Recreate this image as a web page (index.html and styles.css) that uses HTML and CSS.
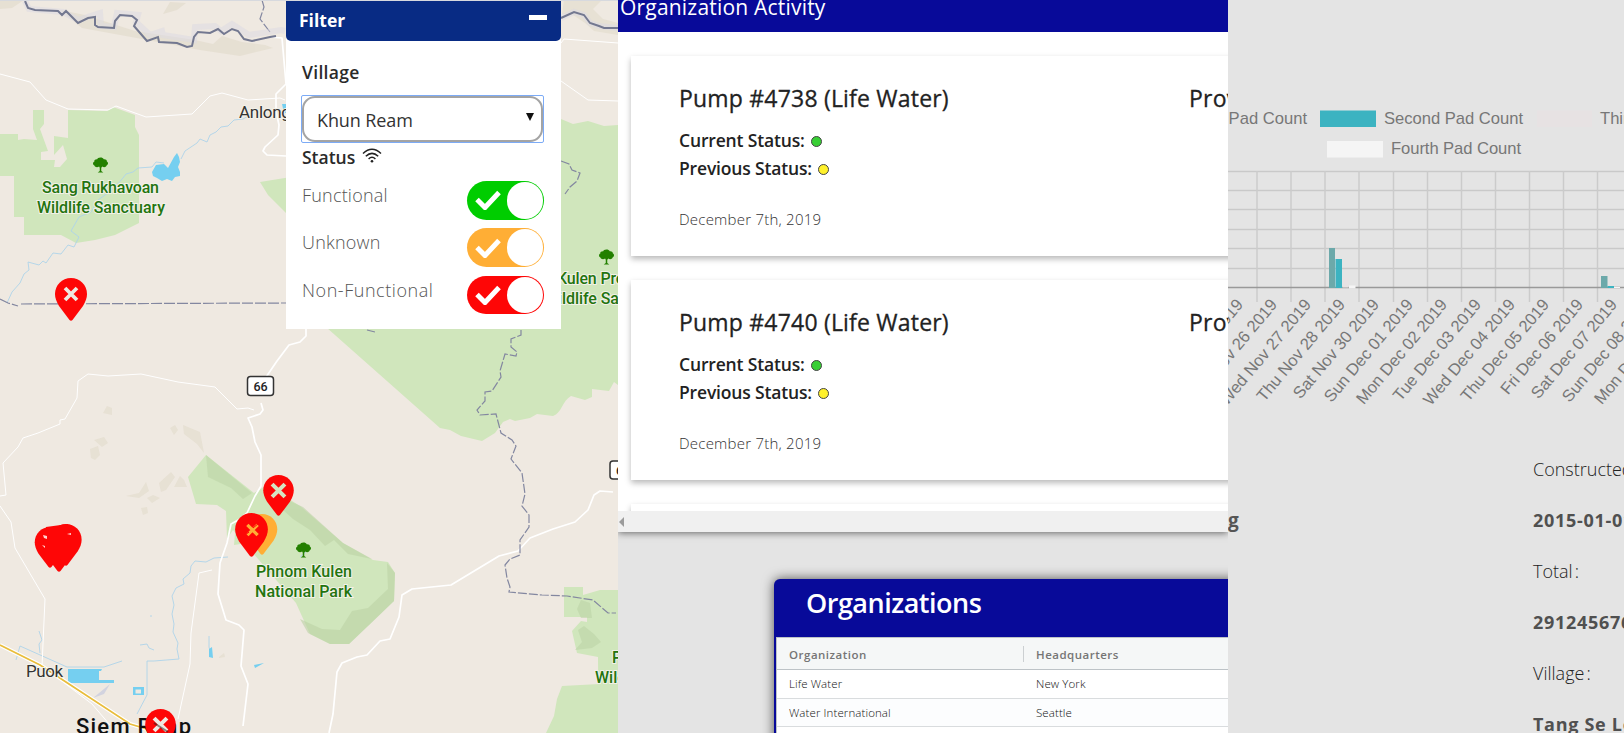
FILE: index.html
```html
<!DOCTYPE html>
<html lang="en">
<head>
<meta charset="utf-8">
<title>Pump Monitoring</title>
<link rel="stylesheet" href="styles.css">
</head>
<body>
<section class="map-pane">
  <svg class="map" width="618" height="733" viewBox="0 0 618 733">
    <defs>
      <symbol id="pin" viewBox="0 0 32 44" overflow="visible">
        <path d="M16 0C7 0 0 7 0 16c0 4 1.400 7.500 4 12L14.500 42q1.500 1.600 3 0L28 28c2.600-4.500 4-8 4-12C32 7 25 0 16 0z"/>
      </symbol>
      <symbol id="cross" viewBox="0 0 14 14" overflow="visible"><path d="M1 1l12 12M13 1L1 13" fill="none" stroke-width="3.800"/></symbol>
      <symbol id="tree" viewBox="0 0 16 16" overflow="visible">
        <path d="M8 0C5.500 0 5 1 4.500 1.800 2 1.700 1 3 1.500 4.300-.5 5-.5 8 1.500 8.500 2 10.500 5 10.800 6.500 9.500L7.200 11v3.500L5 16h6l-2.200-1.500V11L10 9.500c1.500 1.500 4 .8 4.500-1 2-1 2-3.500.3-4.300C15 2.500 13 1.500 11.500 1.900 11 .5 9.500 0 8 0z"/>
      </symbol>
    </defs>
    <rect width="618" height="733" fill="#efe9e1"/>
    <g fill="#d0e6bc">
      <path d="M0 134h18v6l6-1 13 1-4-11V110h11v14l-4 5 8 22-7 1v8h14l-1 7h6l7-8-4-14-9 10V136l14 2V110l39 1 6-4 22 8v12l4 8v88l-24 12-20 5-19 3-15-8H24v-18h-10v-41H0z"/>
      <path d="M260 182l31-5 258-60 12 2 12 5 15-3 16 5 14-1v260l-4-3-5 9-17-2v8l-7 3-14-4c-9 5-9 17-18 20l-16-2-7 4-15 3-5-2-7 3-8 11-13 8-21-5-11-6-10-2L318 320 286 279v-66l-18-18z"/>
      <path d="M206 455l48 38 13-8 33 21 43 37 30 17 15 2 7 11-1 28-25 24-20 19H330l-20-10-14-31-63-73-6 9-1-28-9-6-21-1-8-27z" transform="translate(0 0)"/>
      <path d="M564 587h19v8l17-5h18v125l-15-1-4-2-1-55-21-4-5-22 9-10 6 1v-5h-23z"/>
      <path d="M562 686l56-3v50h-72l8-17 3-17z"/>
      <path d="M235 533l12 10-13 2z"/>
    </g>
    <path d="M598 657l20 1v26l-19-1z" fill="#d0e6bc"/>
    <g fill="#e4ddcf" opacity=".75">
      <path d="M60 10l25 5 50 16 60 9 18 4 9-8 20 6 23 3 8 3-33 8-40-6-58-11-60-11z"/>
      <path d="M0 0h24L12 8 0 9zM170 2l16 1-9 7-14 4z"/>
      <path d="M103 413l4-7 5 2v7zM94 440l10-3 4 6-6 4zM90 449l8-3 2 9-5 5-4-2zM126 496l13-3 7-11 3 9-10 7zM159 483l12-11 4 5-9 13-5 2zM147 498l6-3 7 3-8 5zM141 508l6-1 1 6-5 2zM174 487l6-11 4 4 3 7zM170 428l5-3 3 5-4 5zM183 425l17 7 4 21-7-9-13-10zM219 657l5-4 1 4-6 1z"/>
      <path d="M564 0h38l-9 9 10 10 15 4v12l-24-4-9-8-12-8-11-1z"/>
    </g>
    <g fill="#bdd3a6" opacity=".6">
      <path d="M387 563l8 10-1 28-25 24-20 19H330l-22-11-8-14 22 10 18 1 12-19 16-3 20-19z"/>
      <path d="M206 455l46 38-9 6-12-11-23-11zM285 499l18 8 40 36 29 16-24-5-14-14-9 6-15-16-17-11-12-11z"/>
      <path d="M577 609l4-9 9 3 2 15h-11zM578 630l6-4 10 8 7 8-9 6-17 2 7-8z"/>
    </g>
    <g fill="none" stroke="#aed4ea" stroke-width=".9">
      <path d="M7 303l5-11 8-9 4-9 5-4-1-8 11 3 4-4 3 2 7-10 8 1 7-9 6 2 5-10-8-6 8-14 12-5 7-12 14-10 11-12 3-4 7-2 5-4 14-1 4-5 8 1M181 159l4-8 12-8 3-4 7 3 3-7 6-3 5-5 7-1 6-6 9-1 7-4"/>
      <path d="M228 557l-14 1-8 4-11-1-4 5-1 7-7 6 1 5-8 4-4 8 2 9-2 9 2 10-1 8 5 11-1 6 2 10-25 2h-7v34l-10 19M16 660l4-14 47 21h37l18-6M39 631l3 9-3 4 1 9M140 645l7-1 2 4 5 2M209 636v11l2 8M150 616h2M300 557l7-6"/>
    </g>
    <g fill="#75cff0">
      <path d="M152 172l4-7 8-1 4 4 6-11 3-4 2 4 1 5-2 5 2 5v4l-5 1-3 4-5-2-5 2-5-3-4-2z"/>
      <path d="M68 669h34l-1 2h-2v9h15v3H68z"/><path fill-rule="evenodd" d="M133 687h11v8h-11zm2.500 2.500v4h5.500v-4zM209 649l3-2 1 11-4-1zM254 665l10-2-9 5z"/><path d="M282 104h5v9h-3z"/>
    </g>
    <path d="M93 698l17-14-6 10z" fill="#d2d3df"/>
    <g fill="none" stroke="#fff" stroke-width="1" stroke-linejoin="round">
      <path d="M0 74l30 8 16 18 22 9 40 1 8-4 30 11 46-3 18-18 12-3 26 7 32-2 5 2M0 496l6-1-3-32 15-16 5-9 15-5 22-9v-4l5-1 12-21 1-17 10-7 20 2 33-2 37 8 37 5 22 22 11-1 6 2M0 506l11 16 4 26 30 51-3 67 50 38 18 21M212 570l-13 3-8 60-1 31-12 55M561 43l3-4 54 4M561 81l27 19 30 1"/>
    </g>
    <g fill="none" stroke="#fff" stroke-width="1.700" stroke-linejoin="round">
      <path d="M269 37l13 1 4 46-10 10v17l3 14-1 10-13 12-2 4 4 4 19 1M306 329v7l-6 6-11 3-12 16-15 22M261 403l2 7-3 4-12 4 4 9 3 15 6 13v31l-6 10-8 17-7 6-9 5-4 19-7 20-2 31 8 26 13 5 5 5-3 36 7 18-5 42M329 733l4-19 4-42 5-9 15-6 10-2 13-14 10-2 9-22 3-22 10-6 39-4 48-29 19-5 12-13 23-9 22-7 13-12 6-15 6-4 13 1"/>
    </g>
    <g fill="none" stroke="#8387a0" stroke-width="1.200">
      <path d="M262 0l2 7-4 12 10 13M0 299l8 4 10 3M21 304l265-1" stroke-dasharray="11 2"/>
      <path d="M561 161l8 3 3 6 8 3-3 8-7 6-5 7M521 330v5l-10 4v8l6 5-1 4-11-2-5 17 1 6-9 14-7 1v9l-8 9 3 5 16-1 5 19 11 7 4 6-5 13 11 14 3 21-3 12 7 9v12l-9 13v15l-10 4-5 6 2 13 3 9-1 5 33 3 25 1 26 4 15 13h8M367 330l8 2" stroke-dasharray="9 2"/>
    </g>
    <path d="M25 1l4 8 34 3 15 8 22-7 1 13 13 1 3-14 21 2-2 7 14 13 12-4 1 4 31 5 1-13 20-1 6 5 11-7 17 11 32-5 4 1M561 18l13-6 10 3 6 8 9 3 19 2" fill="none" stroke="#dcdae4" stroke-width="6" opacity=".5"/>
    <path d="M25 1l3 7 7 2 23 1 4 4 4-4 12 12 10-5 7-1v8l3 2 16 1 1-7 5-6 12 1 5 4-3 6 13 15 11-4 1 5 18 1 10 4 5-1 2-9 4-5 12 1 8-4 6 5 8-5 6 2 6 8 8 2 18-4 6-1M561 18l13-6 10 3 6 8 9 3 5 2h14" fill="none" stroke="#737890" stroke-width="2"/>
    <path d="M0 645l40 20 90 59 27 8" fill="none" stroke="#fff" stroke-width="4"/><path d="M0 645l40 20 90 59 27 8" fill="none" stroke="#e9bd3c" stroke-width="1.800"/>
    <g class="park-label">
      <use href="#tree" x="93" y="157" width="15" height="16"/><use href="#tree" x="599" y="249" width="15" height="16"/><use href="#tree" x="296" y="542" width="15" height="16"/>
      <text x="42" y="193" textLength="117">Sang Rukhavoan</text><text x="37" y="213" textLength="128">Wildlife Sanctuary</text>
      <text x="557" y="284" textLength="104">Kulen Promtep</text><text x="544" y="304" textLength="128">Wildlife Sanctuary</text>
      <text x="256" y="577" textLength="96">Phnom Kulen</text><text x="255" y="597" textLength="97">National Park</text>
      <text x="612" y="663">Phnom</text><text x="595" y="683">Wildlife</text>
    </g>
    <g class="town-label"><text x="239" y="118" textLength="93">Anlong Veng</text><text x="26" y="677" textLength="37">Puok</text></g>
    <text class="city-label" x="76" y="734" textLength="115">Siem Reap</text>
    <g class="shield"><rect x="247.500" y="376.500" width="26" height="19" rx="3"/><text x="253.500" y="391">66</text><rect x="610" y="461" width="26" height="18" rx="3"/><text x="616" y="475">66</text></g>
    <g fill="#fe0606">
      <use href="#pin" x="55" y="278" width="32" height="44"/>
      <use href="#pin" x="263" y="475" width="31" height="42"/>
      <use href="#pin" x="246" y="514" width="32" height="42" fill="#ffae35"/>
      <use href="#pin" x="235" y="513" width="33" height="45"/>
      <use href="#pin" x="34" y="527" width="32" height="42"/><use href="#pin" x="43" y="529" width="32" height="44"/><use href="#pin" x="50" y="524" width="32" height="43"/><path d="M46 527l22-3v35H46z"/>
      <use href="#pin" x="145" y="709" width="31" height="42"/>
    </g>
    <g stroke="#efe9e1"><use href="#cross" x="64" y="287" width="14" height="14"/><use href="#cross" x="271" y="483" width="15" height="15" stroke="#d5e4c2"/><use href="#cross" x="153" y="717" width="15" height="15"/></g>
    <use href="#cross" x="246" y="524" width="13" height="12" stroke="#ffae35"/>
    <path d="M245 535l4-3M253 528l6-5" stroke="#fe0606" stroke-width="1"/>
    <path d="M43 535l4 1v3l-3-1zM67 534l4-1v2zM42 545l3 1v2zM65 540l3 1z" fill="#ffd4d0"/>
    <path d="M154 723l14 9" stroke="#222" stroke-width="2" opacity=".5"/>
    <rect width="618" height="1" fill="#d7d9de"/>
  </svg>

  <aside class="filter">
    <header class="filter-head"><span>Filter</span><i class="collapse"></i></header>
    <div class="filter-body">
      <div class="label village-label">Village</div>
      <div class="select-focus"><div class="select"><span>Khun Ream</span><i class="caret"></i></div></div>
      <div class="label status-label"><span>Status</span>
        <svg class="wifi" width="20" height="15" viewBox="0 0 20 15"><g fill="none" stroke="#222" stroke-width="1.500"><path d="M1 5.500Q10-3 19 5.500M3.800 8.300Q10 2.400 16.200 8.300M6.600 11Q10 7.600 13.400 11"/></g><circle cx="10" cy="13.300" r="1.300" fill="#222"/></svg>
      </div>
      <div class="toggle-row"><span class="functional">Functional</span><div class="toggle green"><svg width="26" height="20" viewBox="0 0 26 20"><path d="M2 9.500l8 8L24 2.500" fill="none" stroke="#fff" stroke-width="5"/></svg><i></i></div></div>
      <div class="toggle-row"><span class="unknown">Unknown</span><div class="toggle orange"><svg width="26" height="20" viewBox="0 0 26 20"><path d="M2 9.500l8 8L24 2.500" fill="none" stroke="#fff" stroke-width="5"/></svg><i></i></div></div>
      <div class="toggle-row"><span class="nonfunctional">Non-Functional</span><div class="toggle red"><svg width="26" height="20" viewBox="0 0 26 20"><path d="M2 9.500l8 8L24 2.500" fill="none" stroke="#fff" stroke-width="5"/></svg><i></i></div></div>
    </div>
  </aside>
</section>

<section class="org-pane">
  <div class="activity">
    <header class="activity-head"><span>Organization Activity</span></header>
    <div class="cards">
      <article class="card">
        <div class="card-main"><h3>Pump #4738 (Life Water)</h3>
          <p class="status"><span class="cur">Current Status:</span><i class="dot ok"></i></p>
          <p class="status"><span class="prev">Previous Status:</span><i class="dot warn"></i></p>
          <p class="date">December 7th, 2019</p></div>
        <h3 class="province">Province</h3>
      </article>
      <article class="card">
        <div class="card-main"><h3>Pump #4740 (Life Water)</h3>
          <p class="status"><span class="cur">Current Status:</span><i class="dot ok"></i></p>
          <p class="status"><span class="prev">Previous Status:</span><i class="dot warn"></i></p>
          <p class="date">December 7th, 2019</p></div>
        <h3 class="province">Province</h3>
      </article>
      <article class="card"></article>
    </div>
    <div class="scrollbar"><i></i></div>
  </div>
  <div class="orgs">
    <h2><span>Organizations</span></h2>
    <div class="table">
      <div class="row head"><span class="c1">Organization</span><span class="c2">Headquarters</span></div>
      <div class="row r1"><span class="c1">Life Water</span><span class="c2">New York</span></div>
      <div class="row r2"><span class="c1">Water International</span><span class="c2">Seattle</span></div>
      <div class="row r3"></div>
    </div>
  </div>
</section>

<section class="pump-pane">
  <svg class="chart" width="396" height="420" viewBox="1228 0 396 420">
    <g class="chart-text">
      <text x="1307" y="124" text-anchor="end">First Pad Count</text>
      <text x="1384" y="124" textLength="139">Second Pad Count</text>
      <text x="1600" y="124">Third Pad Count</text>
      <text x="1391" y="154" textLength="130">Fourth Pad Count</text>
    </g>
    <rect x="1320" y="110.500" width="56" height="16.500" fill="#3cb3c1"/>
    <rect x="1537" y="110.500" width="55" height="16.500" fill="#e7e2e3"/>
    <rect x="1327" y="141" width="56" height="16.500" fill="#f5f5f5"/>
    <path d="M1228 171.500h396M1228 190.500h396M1228 209.500h396M1228 229.500h396M1228 248.500h396M1228 268.500h396" stroke="#c9c9c9" stroke-width="1.400"/>
    <path d="M1257 171v131M1291 171v131M1325 171v131M1359 171v131M1393.500 171v131M1427.500 171v131M1461.500 171v131M1495.500 171v131M1529.500 171v131M1563.500 171v131M1597.500 171v131" stroke="#cbcbcb" stroke-width="1.500"/>
    <path d="M1228 287.500h396" stroke="#999" stroke-width="1.300"/>
    <path d="M1329 248h6v40h-6zM1601 276h6.500v12h-6.500z" fill="#6ca9aa"/>
    <path d="M1335.500 259h6.500v29h-6.500zM1607.500 286h6.500v2h-6.500z" fill="#3cb3c1"/>
    <path d="M1342.500 278h6v9.500h-6z" fill="#e7e2e3"/><path d="M1349 285.500h6.500v3h-6.500zM1614 287h6v1h-6z" fill="#f5f5f5"/>
    <g class="chart-text" text-anchor="end">
      <text transform="translate(1244 305) rotate(-50)">Mon Nov 25 2019</text>
      <text transform="translate(1278 305) rotate(-50)">Tue Nov 26 2019</text>
      <text transform="translate(1312 305) rotate(-50)">Wed Nov 27 2019</text>
      <text transform="translate(1346 305) rotate(-50)">Thu Nov 28 2019</text>
      <text transform="translate(1380 305) rotate(-50)">Sat Nov 30 2019</text>
      <text transform="translate(1414 305) rotate(-50)">Sun Dec 01 2019</text>
      <text transform="translate(1448 305) rotate(-50)">Mon Dec 02 2019</text>
      <text transform="translate(1482 305) rotate(-50)">Tue Dec 03 2019</text>
      <text transform="translate(1516 305) rotate(-50)">Wed Dec 04 2019</text>
      <text transform="translate(1550 305) rotate(-50)">Thu Dec 05 2019</text>
      <text transform="translate(1584 305) rotate(-50)">Fri Dec 06 2019</text>
      <text transform="translate(1618 305) rotate(-50)">Sat Dec 07 2019</text>
      <text transform="translate(1652 305) rotate(-50)">Sun Dec 08 2019</text>
      <text transform="translate(1686 305) rotate(-50)">Mon Dec 09 2019</text>
    </g>
  </svg>
  <div class="details">
    <div class="working"><b>g</b></div>
    <dl>
      <dt>Constructed:</dt><dd>2015-01-01</dd>
      <dt>Total<i>:</i></dt><dd>2912456764</dd>
      <dt>Village<i>:</i></dt><dd>Tang Se Loeu</dd>
    </dl>
  </div>
</section>
</body>
</html>
```
FILE: styles.css
```css
* { box-sizing: border-box; }
body { margin: 0; width: 1624px; height: 733px; overflow: hidden; display: flex; background: #e4e4e4; font-family: "Open Sans", "Noto Sans", sans-serif; color: #222; }
h2, h3, p, dl, dt, dd { margin: 0; font-weight: inherit; }
i { font-style: normal; }
section { height: 733px; overflow: hidden; flex: none; }

.map-pane { width: 618px; position: relative; }
.map { display: block; }
.park-label { fill: #23740f; font: 500 16px Roboto, sans-serif; }
.park-label text, .town-label text { paint-order: stroke; stroke: #f3f1e8; stroke-width: 2px; }
.park-label use { fill: #238000; }
.town-label { fill: #333; font: 400 17px Roboto, sans-serif; }
.city-label { fill: #111; font: 500 22px Roboto, sans-serif; }
.shield rect { fill: #fff; stroke: #333; stroke-width: 1.5px; }
.shield text { fill: #222; font: 500 12.5px Roboto, sans-serif; }

.filter { position: absolute; left: 286px; top: 1px; width: 275px; height: 328px; background: #fff; }
.filter-head { height: 40px; padding: 0 14px 0 13px; background: #082b84; border-radius: 0 0 5px 5px; color: #fff; display: flex; justify-content: space-between; font-size: 17.5px; font-weight: 700; line-height: 38px; }
.collapse { width: 18px; height: 5px; margin-top: 14px; background: #fff; }
.filter-body { padding: 19px 17px 0 16px; }
.label { font-weight: 600; font-size: 17.5px; line-height: 24px; color: #2a2a2a; }
.village-label { height: 35px; letter-spacing: .3px; }
.select-focus { width: 243px; height: 48px; margin-left: -1px; border: 1.5px solid #7cabf6; border-radius: 2px; }
.select { height: 46px; border: 2.5px solid #a4a4a4; border-radius: 13px; padding: 0 7px 0 13px; display: flex; justify-content: space-between; font-size: 18px; line-height: 44px; letter-spacing: -.1px; color: #333; }
.caret { margin-top: 15px; width: 0; height: 0; border: 4.5px solid transparent; border-top: 8px solid #111; border-bottom: 0; }
.status-label { display: flex; gap: 7px; height: 38px; padding-top: 2px; }
.wifi { margin-top: 3px; }
.toggle-row { height: 47.300px; display: flex; justify-content: space-between; font-size: 18px; font-weight: 300; line-height: 28px; color: #555; }
.functional, .unknown { letter-spacing: .2px; }
.nonfunctional { letter-spacing: .55px; }
.toggle { width: 77px; height: 38.500px; border-radius: 20px; display: flex; align-items: center; justify-content: space-between; padding: 0 1px 0 8px; }
.toggle i { width: 36.500px; height: 36.500px; border-radius: 50%; background: #fff; }
.green { background: #00cd00; }
.orange { background: #ffae35; }
.red { background: #fe0606; }

.org-pane { width: 610px; background: #e4e4e4; }
.activity { height: 532px; background: #fff; display: flex; flex-direction: column; box-shadow: 0 1px 7px rgba(0,0,0,.55); }
.activity-head { height: 32px; background: #080a99; color: #fff; padding-left: 2px; font-size: 21px; line-height: 28px; letter-spacing: .2px; flex: none; }
.activity-head span { display: block; margin-top: -7px; }
.cards { flex: 1; overflow: hidden; padding: 24px 0 0 13px; display: flex; flex-direction: column; gap: 24px; }
.card { width: 900px; height: 200px; flex: none; background: #fff; box-shadow: 0 3px 6px rgba(0,0,0,.28); padding: 25px 0 0 48px; display: flex; }
.card-main { width: 510px; }
.card h3 { font-size: 23px; font-weight: 500; line-height: 34px; height: 45px; letter-spacing: .2px; -webkit-text-stroke: .3px #222; }
.status { display: flex; align-items: center; gap: 6px; font-size: 17.500px; font-weight: 600; line-height: 28px; height: 28px; letter-spacing: -.16px; }
.dot { width: 11px; height: 11px; border: 1px solid #444; border-radius: 50%; margin-top: 3px; }
.ok { background: #38cf35; }
.warn { background: #fff12b; }
.date { margin-top: 25px; font-size: 15px; line-height: 24px; font-weight: 300; color: #333; letter-spacing: .23px; }
.scrollbar { height: 21px; background: #f0f0f0; padding: 6px 1px; flex: none; }
.scrollbar i { display: block; width: 0; height: 0; border: 5px solid transparent; border-left: 0; border-right: 5px solid #9b9b9b; }
.orgs { margin: 47px 0 0 156px; width: 700px; height: 200px; background: #080a99; border-radius: 6px 6px 0 0; box-shadow: 0 0 12px rgba(0,0,0,.65); padding-left: 2px; }
.orgs h2 { height: 58px; padding-left: 30px; color: #fff; font-size: 27px; font-weight: 600; line-height: 48px; letter-spacing: -.5px; }
.table { background: #fff; border-top: 1px solid #bdc3c7; border-left: 1px solid #bdc3c7; height: 142px; }
.row { display: flex; height: 28px; padding-left: 12px; border-bottom: 1px solid #d9dcde; font-size: 11.5px; line-height: 28px; font-weight: 300; color: #111; letter-spacing: .1px; }
.row .c1 { width: 235px; }
.row.head { height: 32px; background: #f5f7f7; border-bottom-color: #bdc3c7; font-weight: 600; color: #757575; line-height: 34px; letter-spacing: .5px; }
.head .c2 { position: relative; padding-left: 12px; }
.head .c2::before { content: ""; position: absolute; left: -1px; top: 8px; height: 16px; width: 1px; background: #ccd0d2; }
.row:not(.head) .c2 { padding-left: 12px; }
.r1 { height: 29px; }
.r2 { background: #fcfdfe; }

.pump-pane { width: 396px; background: #e4e4e4; }
.chart { display: block; }
.chart-text { fill: #777; font: 16.600px "Liberation Sans", Arial, sans-serif; }
.details { display: flex; }
.working { width: 305px; flex: none; padding-top: 87px; font-size: 19px; line-height: 27px; color: #555; }
dl { flex: none; width: 180px; padding-top: 36px; font-size: 18px; line-height: 27px; }
dt, dd { height: 51px; white-space: nowrap; }
dt { font-weight: 300; color: #222; }
dt i { margin-left: 2px; }
dd { font-weight: 700; color: #505050; letter-spacing: .7px; }
```
